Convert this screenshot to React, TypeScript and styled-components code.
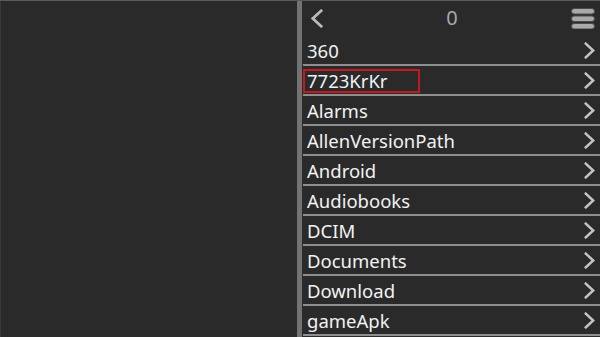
import React from "react";
import styled, { createGlobalStyle } from "styled-components";

const Global = createGlobalStyle`
  html, body { margin: 0; padding: 0; background: #2a2a2a; }
  body { font-family: "Noto Sans", "Open Sans", sans-serif; overflow: hidden; }
  * { box-sizing: border-box; }
`;

const Screen = styled.div`
  width: 600px;
  height: 337px;
  display: flex;
  background: #2a2a2a;
  border-top: 1px solid #5a5a5a;
  overflow: hidden;
`;

const LeftPane = styled.div`
  width: 297px;
  flex: none;
  background: #2a2a2a;
  border-left: 1px solid #3a3a3a;
`;

const Divider = styled.div`
  width: 5px;
  flex: none;
  background: #737373;
`;

const RightPane = styled.div`
  flex: 1;
  display: flex;
  flex-direction: column;
  padding-left: 1px;
  min-width: 0;
`;

const Header = styled.div`
  height: 35px;
  flex: none;
  display: flex;
  align-items: center;
  justify-content: space-between;
  padding: 0 5px 1px 8px;
`;

const Title = styled.div`
  color: #a8a8a8;
  font-size: 20px;
  line-height: 1;
  margin-left: 10px;
`;

const List = styled.div`
  display: flex;
  flex-direction: column;
`;

const Row = styled.div`
  height: 30px;
  flex: none;
  display: flex;
  align-items: center;
  justify-content: space-between;
  border-bottom: 2px solid #8f8f8f;
  padding: 0 5px 0 0;
`;

const Label = styled.span<{ $focused?: boolean }>`
  color: #f2f2f2;
  font-size: 18.5px;
  line-height: 24px;
  height: 24px;
  padding: 0 2px;
  border: 2px solid ${(p) => (p.$focused ? "#c41a1f" : "transparent")};
  width: ${(p) => (p.$focused ? "117px" : "auto")};
  display: inline-flex;
  align-items: center;
  margin-top: 2px;
`;

const Chevron = ({ dir = "right", w = 11, h = 17, color = "#c4c4c4" }: { dir?: "left" | "right"; w?: number; h?: number; color?: string }) => (
  <svg width={w} height={h} viewBox="0 0 10 16" style={{ display: "block" }}>
    <path
      d={dir === "right" ? "M1.5 1.5 L8.5 8 L1.5 14.5" : "M8.5 1.5 L1.5 8 L8.5 14.5"}
      fill="none"
      stroke={color}
      strokeWidth="2.3"
      strokeLinecap="square"
    />
  </svg>
);

const Menu = () => (
  <svg width="24" height="21" viewBox="0 0 24 21" style={{ display: "block" }}>
    {[0, 7.5, 15].map((y) => (
      <rect key={y} x="0.5" y={y + 0.5} width="23" height="5.5" rx="2.7" fill="#a9a9a9" stroke="#4a4a4a" strokeWidth="1" />
    ))}
  </svg>
);

const items = [
  "360",
  "7723KrKr",
  "Alarms",
  "AllenVersionPath",
  "Android",
  "Audiobooks",
  "DCIM",
  "Documents",
  "Download",
  "gameApk",
];

export default function App() {
  return (
    <>
      <Global />
      <Screen>
        <LeftPane />
        <Divider />
        <RightPane>
          <Header>
            <Chevron dir="left" w={12} h={19} color="#b9b9b9" />
            <Title>0</Title>
            <Menu />
          </Header>
          <List>
            {items.map((name, i) => (
              <Row key={name}>
                <Label $focused={i === 1}>{name}</Label>
                <Chevron />
              </Row>
            ))}
          </List>
        </RightPane>
      </Screen>
    </>
  );
}
